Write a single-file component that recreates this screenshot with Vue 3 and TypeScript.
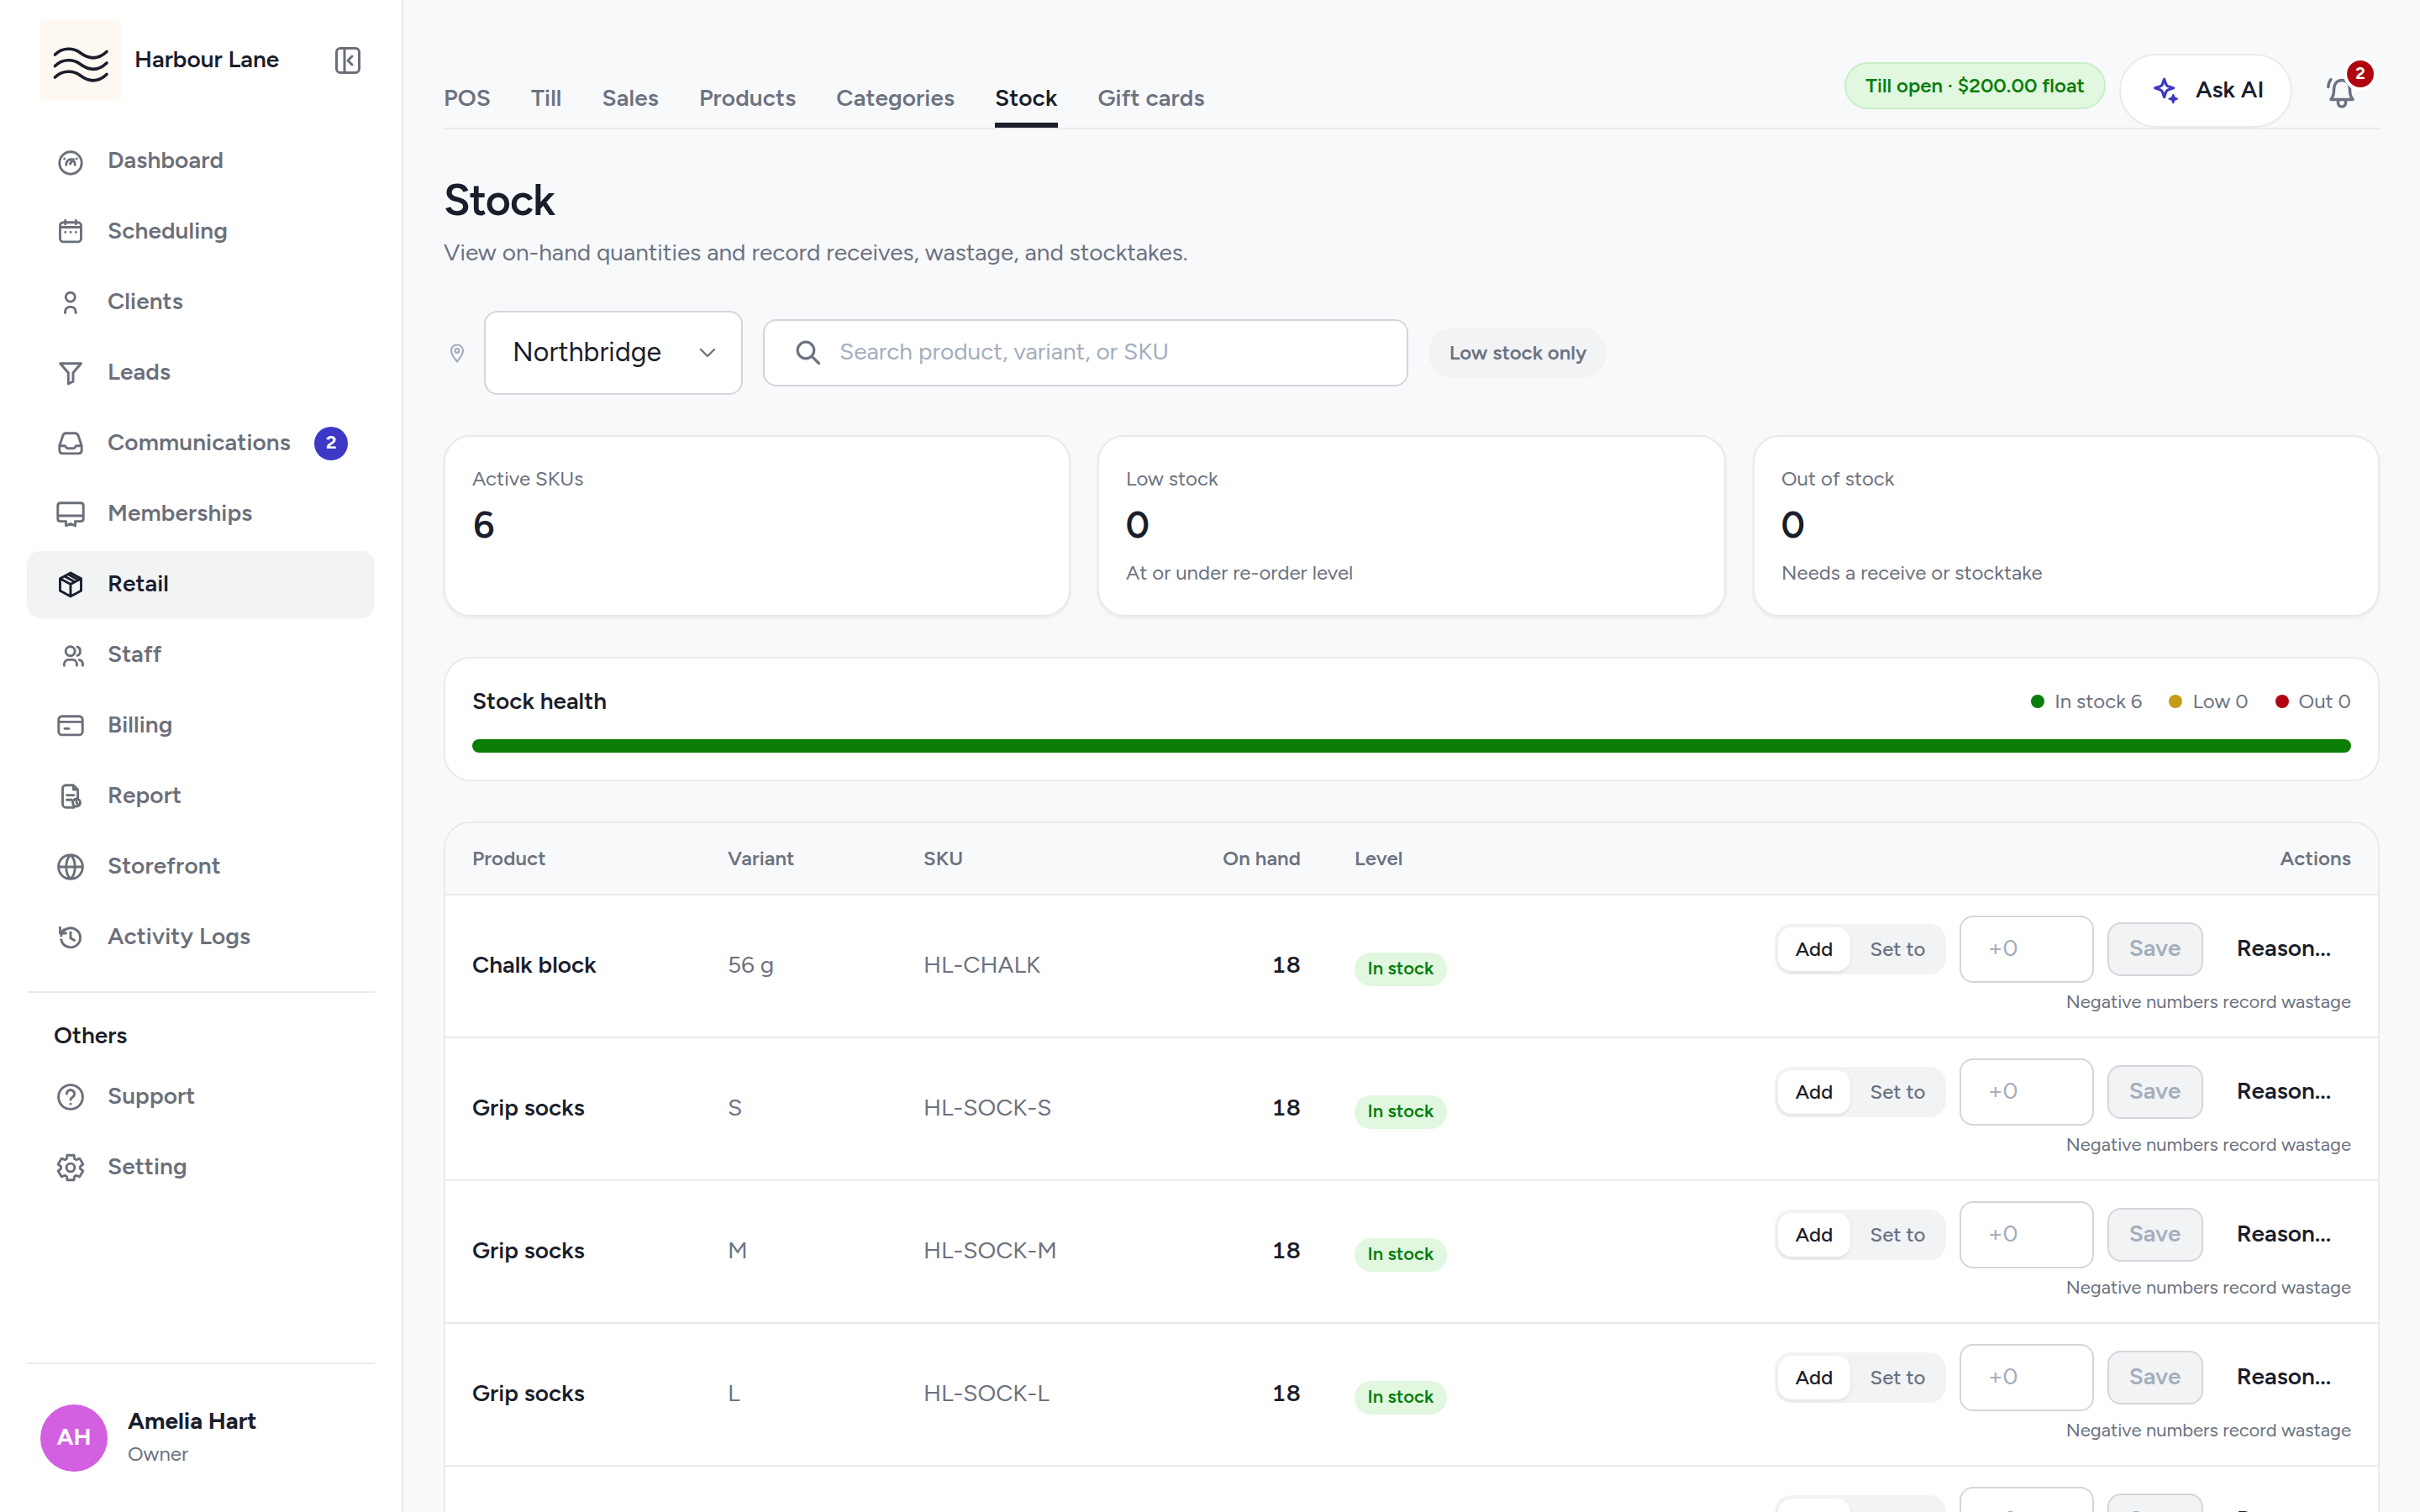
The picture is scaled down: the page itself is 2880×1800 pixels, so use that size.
<script setup lang="ts">
interface NavItem { label: string; icon: string; active?: boolean; badge?: number }
interface Row { product: string; variant: string; sku: string; onHand: number | null }

const circle = (x: number, y: number, r: number): string =>
  `M${x - r} ${y}a${r} ${r} 0 1 0 ${2 * r} 0a${r} ${r} 0 1 0 ${-2 * r} 0Z`

// Six-tooth gear outline, one tooth every 60 degrees
const gear = (): string => {
  const tooth: [number, number][] = [[-4.6, -10.6], [-4, -14.8], [4, -14.8], [4.6, -10.6]]
  const pts: string[] = []
  for (let k = 0; k < 6; k++) {
    const a = (k * Math.PI) / 3
    for (const [x, y] of tooth) {
      pts.push(`${(x * Math.cos(a) - y * Math.sin(a)).toFixed(2)} ${(x * Math.sin(a) + y * Math.cos(a)).toFixed(2)}`)
    }
  }
  return `M${pts.join('L')}Z`
}

const icons: Record<string, string> = {
  dashboard: circle(0, 2, 13.2) + 'M-5.3 4.4C-5.3.2-3-2.2 1-2.2M5.3 4.4C5.3 2.6 5 1.200 4.200.2M-.6 3L3.600-2.400M-7.300-3h.01M7.200-3h.01',
  scheduling: 'M-8.6-11.3H8.500a4 4 0 0 1 4 4V7.900a4 4 0 0 1-4 4H-8.500a4 4 0 0 1-4-4V-7.300a4 4 0 0 1 4-4ZM-12.500-5.500H12.500M-6.300-13.600v4.400M6.300-13.600v4.400M-6.300.4h.01M0 .4h.01M6.300.4h.01',
  clients: circle(-0.2, -6.3, 5.5) + 'M-6.5 12.6V11a5.600 5.600 0 0 1 5.600-5.600h1.400a5.600 5.600 0 0 1 5.600 5.600V12.600',
  leads: 'M-12.3-11.3H12.500L3-.2V10.200L-2.700 12.900V-.2Z',
  communications: 'M-13.2 2.7L-9.2-9.3Q-8.200-12.200-5.500-12.200H5.500Q8.200-12.200 9.200-9.300L13.200 2.700V8Q13.200 11.900 9.300 11.900H-9.300Q-13.200 11.900-13.200 8ZM-13.200 2.700H-7.600Q-6 2.700-5.500 4.200T-3.300 5.700H3.300Q5 5.700 5.500 4.200T7.600 2.700H13.200',
  memberships: 'M-5.5 8.600H-12Q-15.200 8.600-15.200 5.400V-10Q-15.200-13.200-12-13.200H12Q15.200-13.200 15.200-10V5.400Q15.200 8.600 12 8.600H5.500M-15.200 2H15.200M-5.500 8.600V13.900L0 11.500L5.500 13.900V8.600',
  retail: 'M0-14L12.5-7.300V7.300L0 14L-12.500 7.300V-7.300ZM-12.500-7.300L0-.4L12.500-7.300M0-.4V14M-7.200-9.900L5-3.200M-2.800-12.300L9.200-5.600',
  staff: circle(-0.3, -4.7, 5.5) + 'M-7.6 12.300V10.600a5.200 5.200 0 0 1 5.200-5.200h4.600a5.200 5.200 0 0 1 5.200 5.200V12.300M8-9.900C12.500-9 12.500-.8 8 .4M10.500 5.600C13 6.200 14.400 8 14.400 10.600V12.300',
  billing: 'M-10.3-11.300H10.200a4 4 0 0 1 4 4V6.900a4 4 0 0 1-4 4H-10.200a4 4 0 0 1-4-4V-7.300a4 4 0 0 1 4-4ZM-14.200-4.600H14.200M-7 3.400H-2',
  report: 'M4 13.200H-5.500a4 4 0 0 1-4-4V-9.300a4 4 0 0 1 4-4H3.300L8.600-8V3M3.300-13.300V-8H8.600M-4.500-1.400H4M-4.500 4.200H1' + circle(7, 7.5, 4.5) + 'M7 5.500V7.700L8.500 9',
  storefront: circle(0, 0, 14.4) + 'M-14.4 0H14.400M0-14.400C-7-8-7 8 0 14.400C7 8 7-8 0-14.400Z',
  activity: 'M-11.200-2A11.500 11.500 0 1 1-11.200 2.600M-12.500-11.800V-5H-5.600M-12-5L-8-9.200M0-6V.8L4.600 3.400',
  support: circle(0, 0, 14.4) + 'M-4.600-3.800A4.600 4.600 0 1 1 2.600 0C1 1 0 1.800 0 3.200M0 8.200h.01',
  setting: gear() + circle(0, 0, 4.9),
}

const nav: NavItem[] = [
  { label: 'Dashboard', icon: 'dashboard' },
  { label: 'Scheduling', icon: 'scheduling' },
  { label: 'Clients', icon: 'clients' },
  { label: 'Leads', icon: 'leads' },
  { label: 'Communications', icon: 'communications', badge: 2 },
  { label: 'Memberships', icon: 'memberships' },
  { label: 'Retail', icon: 'retail', active: true },
  { label: 'Staff', icon: 'staff' },
  { label: 'Billing', icon: 'billing' },
  { label: 'Report', icon: 'report' },
  { label: 'Storefront', icon: 'storefront' },
  { label: 'Activity Logs', icon: 'activity' },
]
const others: NavItem[] = [
  { label: 'Support', icon: 'support' },
  { label: 'Setting', icon: 'setting' },
]
const tabs = ['POS', 'Till', 'Sales', 'Products', 'Categories', 'Stock', 'Gift cards']
const activeTab = 'Stock'
const stats = [
  { label: 'Active SKUs', value: 6, note: '' },
  { label: 'Low stock', value: 0, note: 'At or under re-order level' },
  { label: 'Out of stock', value: 0, note: 'Needs a receive or stocktake' },
]
const legend = [
  { tone: 'green', text: 'In stock 6' },
  { tone: 'amber', text: 'Low 0' },
  { tone: 'red', text: 'Out 0' },
]
const rows: Row[] = [
  { product: 'Chalk block', variant: '56 g', sku: 'HL-CHALK', onHand: 18 },
  { product: 'Grip socks', variant: 'S', sku: 'HL-SOCK-S', onHand: 18 },
  { product: 'Grip socks', variant: 'M', sku: 'HL-SOCK-M', onHand: 18 },
  { product: 'Grip socks', variant: 'L', sku: 'HL-SOCK-L', onHand: 18 },
  { product: '', variant: '', sku: '', onHand: null },
]
</script>

<template>
  <div class="app">
    <aside class="sidebar">
      <div class="brand">
        <svg class="logo" viewBox="0 0 96 96">
          <rect width="96" height="96" fill="#fdf8f1" />
          <g fill="none" stroke="#1a1d2b" stroke-width="3.6" stroke-linecap="round">
            <path d="M17.5 41C26 32.5 39 32.5 47 38.5S67 49 79 37.5" />
            <path d="M17.5 54.6C26 46 39 46 47 52S67 62.6 79 51" />
            <path d="M17.5 68C26 59.5 39 59.5 47 65.5S67 76 79 64.5" />
          </g>
        </svg>
        <span class="brand-name">Harbour Lane</span>
        <svg class="collapse" viewBox="0 0 32 34">
          <g fill="none" stroke="#6b6f7a" stroke-width="3" stroke-linecap="round" stroke-linejoin="round">
            <rect x="2.5" y="2.5" width="27" height="29" rx="4.5" />
            <path d="M12 2.5V31.5M21 12l-5 5l5 5" />
          </g>
        </svg>
      </div>

      <nav class="nav">
        <a v-for="item in nav" :key="item.label" class="nav-item" :class="{ active: item.active }">
          <svg class="nav-icon" viewBox="-20 -20 40 40"><path :d="icons[item.icon]" /></svg>
          <span class="nav-label">{{ item.label }}</span>
          <span v-if="item.badge" class="nav-badge">{{ item.badge }}</span>
        </a>
      </nav>
      <div class="rule"></div>
      <div class="section">Others</div>
      <nav class="nav">
        <a v-for="item in others" :key="item.label" class="nav-item">
          <svg class="nav-icon" viewBox="-20 -20 40 40"><path :d="icons[item.icon]" /></svg>
          <span class="nav-label">{{ item.label }}</span>
        </a>
      </nav>

      <div class="account">
        <div class="avatar">AH</div>
        <div class="who">
          <div class="who-name">Amelia Hart</div>
          <div class="who-role">Owner</div>
        </div>
      </div>
    </aside>

    <main class="main">
      <header class="topbar">
        <div class="tabs">
          <a v-for="tab in tabs" :key="tab" class="tab" :class="{ active: tab === activeTab }">{{ tab }}</a>
        </div>
        <div class="tools">
          <span class="till">Till open · $200.00 float</span>
          <button class="ask">
            <svg class="spark" viewBox="0 0 32 32">
              <path d="M12.6 2.2L14.800 8.400Q15.500 10.200 17.200 10.800L23.600 12.800L17.200 14.900Q15.500 15.500 14.800 17.300L12.600 23.600L10.400 17.300Q9.700 15.500 8 14.900L1.600 12.800L8 10.800Q9.700 10.200 10.400 8.400Z" fill="none" stroke="#3d39c6" stroke-width="3.2" stroke-linejoin="round" />
              <path d="M23.3 20.800L24.600 24.200L28.200 25.600L24.600 27L23.300 30.400L22 27L18.400 25.600L22 24.200Z" fill="#3d39c6" stroke="#3d39c6" stroke-width="2" stroke-linejoin="round" />
            </svg>
            <span>Ask AI</span>
          </button>
          <div class="bell-wrap">
            <svg class="bell" viewBox="0 0 40 40">
              <g fill="none" stroke="#6b7280" stroke-width="3.5" stroke-linecap="round" stroke-linejoin="round">
                <path d="M7 27.5H33C30.5 24.5 29.5 21.5 29.5 16.5C29.5 9.5 26 4.5 20 4.5S10.5 9.5 10.5 16.5C10.5 21.5 9.5 24.5 7 27.5Z" />
                <path d="M15.5 28.5V31.5A4.500 4.500 0 0 0 24.500 31.500V28.500M7 3.500C5 6 4 9 3.800 12.500" />
              </g>
            </svg>
            <span class="bell-badge">2</span>
          </div>
        </div>
      </header>

      <h1 class="title">Stock</h1>
      <p class="subtitle">View on-hand quantities and record receives, wastage, and stocktakes.</p>

      <div class="filters">
        <svg class="pin" viewBox="0 0 24 24">
          <g fill="none" stroke="#a3aebd" stroke-width="2.2">
            <path d="M8 22.5C3.500 17 1 13 1 9.500A7 7 0 0 1 15 9.500C15 13 12.500 17 8 22.500Z" stroke-linejoin="round" />
            <circle cx="8" cy="9.500" r="2.400" />
          </g>
        </svg>
        <div class="select">
          <span>Northbridge</span>
          <svg class="chevron" viewBox="0 0 20 12"><path d="M2 2L10 10L18 2" fill="none" stroke="#6b7280" stroke-width="2.4" stroke-linecap="round" stroke-linejoin="round" /></svg>
        </div>
        <div class="search">
          <svg class="glass" viewBox="0 0 32 32"><g fill="none" stroke="#6b7280" stroke-width="3.2" stroke-linecap="round"><circle cx="13" cy="13" r="9.800" /><path d="M20.300 20.300L28.500 28.500" /></g></svg>
          <span>Search product, variant, or SKU</span>
        </div>
        <span class="low-only">Low stock only</span>
      </div>

      <section class="stats">
        <div v-for="s in stats" :key="s.label" class="stat">
          <div class="stat-label">{{ s.label }}</div>
          <div class="stat-value">{{ s.value }}</div>
          <div v-if="s.note" class="stat-note">{{ s.note }}</div>
        </div>
      </section>

      <section class="health">
        <div class="health-head">
          <span class="health-title">Stock health</span>
          <div class="legend">
            <span v-for="l in legend" :key="l.tone" class="legend-item"><i class="dot" :class="l.tone"></i>{{ l.text }}</span>
          </div>
        </div>
        <div class="bar"></div>
      </section>

      <section class="table">
        <div class="tr head">
          <span>Product</span><span>Variant</span><span>SKU</span><span class="num">On hand</span><span class="level">Level</span><span class="right">Actions</span>
        </div>
        <div v-for="(r, i) in rows" :key="i" class="tr row">
          <span class="cell strong">{{ r.product }}</span>
          <span class="cell muted">{{ r.variant }}</span>
          <span class="cell muted">{{ r.sku }}</span>
          <span class="cell num strong">{{ r.onHand }}</span>
          <span class="level"><span v-if="r.onHand" class="chip">In stock</span></span>
          <div class="actions">
            <div class="controls">
              <div class="segment"><span class="seg on">Add</span><span class="seg">Set to</span></div>
              <div class="qty">+0</div>
              <button class="save">Save</button>
              <span class="reason">Reason...</span>
            </div>
            <div class="hint">{{ r.onHand ? 'Negative numbers record wastage' : '' }}</div>
          </div>
        </div>
      </section>
    </main>
  </div>
</template>

<style>
html, body { margin: 0; overflow: hidden; background: #f8f9fb; }
</style>

<style scoped>
* { box-sizing: border-box; }
.app { display: flex; width: 2880px; height: 1800px; overflow: hidden; background: #f8f9fb; color: #1a1d2b; font-family: Figtree, Lato, "Open Sans", sans-serif; font-size: 28px; line-height: 40px; white-space: nowrap; }
button { font: inherit; color: inherit; padding: 0; }

.sidebar { display: flex; flex-direction: column; width: 480px; height: 1800px; flex: none; padding: 24px 32px 0; background: #fff; border-right: 2px solid #e9eaec; }
.brand { display: flex; align-items: center; height: 96px; padding: 0 16px; margin-bottom: 32px; }
.logo { width: 96px; height: 96px; flex: none; }
.brand-name { flex: 1; margin: -4px 0 0 16px; font-weight: 600; }
.collapse { width: 32px; height: 34px; }
.nav { display: flex; flex-direction: column; gap: 4px; }
.nav-item { display: flex; align-items: center; height: 80px; padding: 0 32px; border-radius: 16px; color: #6b6f7a; font-weight: 600; }
.nav-item.active { background: #f2f3f5; color: #1a1d2b; }
.nav-icon { width: 40px; height: 40px; flex: none; }
.nav-icon path { fill: none; stroke: currentColor; stroke-width: 2.9; stroke-linecap: round; stroke-linejoin: round; }
.nav-label { margin: -4px 0 0 24px; letter-spacing: 0.1px; }
.nav-badge { width: 40px; height: 40px; margin-left: auto; border-radius: 50%; background: #3d39c6; color: #fff; font-size: 22px; font-weight: 700; line-height: 37px; text-align: center; }
.rule { height: 2px; flex: none; margin-top: 24px; background: #e9eaec; }
.section { margin: 30px 0 14px 32px; font-weight: 600; }
.account { display: flex; align-items: center; gap: 24px; height: 178px; margin-top: auto; padding: 0 16px; border-top: 2px solid #e9eaec; }
.avatar { width: 80px; height: 80px; border-radius: 50%; background: #d35fe1; color: #fff; font-weight: 700; line-height: 77px; text-align: center; }
.who { margin-top: -4px; }
.who-name { font-weight: 700; line-height: 40px; }
.who-role { margin-top: 2px; color: #6b7280; font-size: 24px; line-height: 36px; }

.main { width: 2304px; margin-left: 48px; flex: none; }
.topbar { display: flex; justify-content: space-between; height: 154px; border-bottom: 2px solid #e9eaec; }
.tabs { display: flex; align-items: flex-end; gap: 48px; }
.tab { height: 56px; border-bottom: 6px solid transparent; color: #6b7280; font-weight: 600; line-height: 40px; letter-spacing: 0.1px; }
.tab.active { color: #1a1d2b; border-color: #1a1d2b; }
.tools { display: flex; align-items: flex-start; padding: 64px 4px 0 0; }
.till { height: 56px; margin: 10px 16px 0 0; padding: 0 23px; border: 2px solid #c8eec8; border-radius: 28px; background: #e1f7e0; color: #0a7d0a; font-size: 24px; font-weight: 600; line-height: 51px; }
.ask { display: flex; align-items: center; gap: 18px; width: 206px; height: 88px; padding-left: 39px; border: 2px solid #e9eaec; border-radius: 44px; background: #fff; font-weight: 600; }
.ask span { margin-top: -4px; }
.spark { width: 32px; height: 32px; }
.bell-wrap { position: relative; width: 100px; height: 88px; }
.bell { display: block; width: 40px; height: 40px; margin: 27px 0 0 39px; }
.bell-badge { position: absolute; left: 61px; top: 4px; width: 40px; height: 40px; border: 4px solid #fff; border-radius: 50%; background: #b00610; color: #fff; font-size: 20px; font-weight: 700; line-height: 30px; text-align: center; }

.title { margin: 50px 0 0; font-size: 52px; font-weight: 600; line-height: 68px; letter-spacing: -1.04px; }
.subtitle { margin: 8px 0 0; color: #6b7280; line-height: 40px; }
.filters { display: flex; align-items: center; height: 100px; margin-top: 50px; }
.pin { width: 24px; height: 24px; margin: 0 16px 0 8px; }
.select { display: flex; align-items: center; justify-content: space-between; width: 308px; height: 100px; padding: 0 30px 0 32px; border: 2px solid #d4d6db; border-radius: 16px; background: #fff; font-size: 32px; letter-spacing: 0.1px; }
.select span { margin-top: -2px; }
.chevron { width: 20px; height: 12px; }
.search { display: flex; align-items: center; gap: 21px; width: 768px; height: 80px; margin: 0 24px; padding-left: 36px; border: 2px solid #d4d6db; border-radius: 16px; background: #fff; color: #a3aebd; }
.search span { margin-top: -4px; }
.glass { width: 32px; height: 32px; }
.low-only { width: 212px; height: 60px; padding-left: 1px; border-radius: 30px; background: #f2f3f5; color: #6b7280; font-size: 24px; font-weight: 600; line-height: 60px; text-align: center; }

.stats { display: grid; grid-template-columns: 746px 748px 746px; gap: 32px; margin-top: 48px; }
.stat { height: 216px; padding: 33px 32px; border: 2px solid #e9eaec; border-radius: 32px; background: #fff; box-shadow: 0 2px 4px rgba(0, 0, 0, 0.06); }
.stat-label, .stat-note { color: #6b7280; font-size: 24px; line-height: 34px; }
.stat-value { margin: 10px 0 12px; font-size: 44px; font-weight: 600; line-height: 56px; font-variant-numeric: tabular-nums; }
.health { height: 148px; margin-top: 48px; padding: 30px 32px; border: 2px solid #e9eaec; border-radius: 32px; background: #fff; }
.health-head { display: flex; justify-content: space-between; height: 40px; }
.health-title { font-weight: 600; }
.legend { display: flex; gap: 32px; padding-top: 1px; color: #6b7280; font-size: 24px; }
.legend-item { display: flex; align-items: center; gap: 12px; }
.dot { width: 16px; height: 16px; border-radius: 50%; }
.green { background: #0a7d0a; }
.amber { background: #c49a18; }
.red { background: #b00610; }
.bar { height: 16px; margin-top: 26px; border-radius: 8px; background: #0c7d07; }

.table { margin-top: 48px; border: 2px solid #e9eaec; border-radius: 32px 32px 0 0; background: #fff; overflow: hidden; }
.tr { display: grid; grid-template-columns: 304px 233px 200px 249px 264px 1fr; padding: 0 32px; border-bottom: 2px solid #e9eaec; }
.head { height: 86px; align-items: center; background: #f8f9fb; color: #6b7280; font-size: 24px; font-weight: 600; letter-spacing: 0.1px; }
.row { height: 170px; align-items: center; }
.cell { margin-top: -4px; }
.strong { font-weight: 600; }
.muted { color: #6b7280; }
.num { text-align: right; font-variant-numeric: tabular-nums; }
.level { padding-left: 64px; }
.right { text-align: right; }
.chip { display: block; width: 110px; height: 40px; margin-top: 8px; border-radius: 20px; background: #e1f7e0; color: #0a7d0a; font-size: 22px; font-weight: 600; line-height: 37px; text-align: center; }
.actions { display: flex; flex-direction: column; align-items: flex-end; gap: 8px; }
.controls { display: flex; align-items: center; gap: 16px; }
.segment { display: flex; width: 204px; height: 60px; padding: 4px; border-radius: 20px; background: #f2f3f5; color: #6b7280; font-size: 24px; font-weight: 500; }
.seg { flex: 1; padding-left: 3px; line-height: 51px; text-align: center; }
.seg.on { flex: none; width: 86px; padding: 0; border-radius: 16px; background: #fff; color: #1a1d2b; box-shadow: 0 2px 4px rgba(0, 0, 0, 0.08); }
.qty { width: 160px; height: 80px; padding-left: 32px; border: 2px solid #d4d6db; border-radius: 16px; background: #fff; color: #a3aebd; line-height: 72px; }
.save { width: 114px; height: 64px; padding: 0 1px 4px 0; border: 2px solid #d4d6db; border-radius: 16px; background: #f2f3f5; color: #a3aebd; font-weight: 600; }
.reason { width: 160px; margin-top: -4px; text-align: center; font-weight: 600; }
.hint { height: 32px; color: #6b7280; font-size: 22px; line-height: 30px; }
</style>
